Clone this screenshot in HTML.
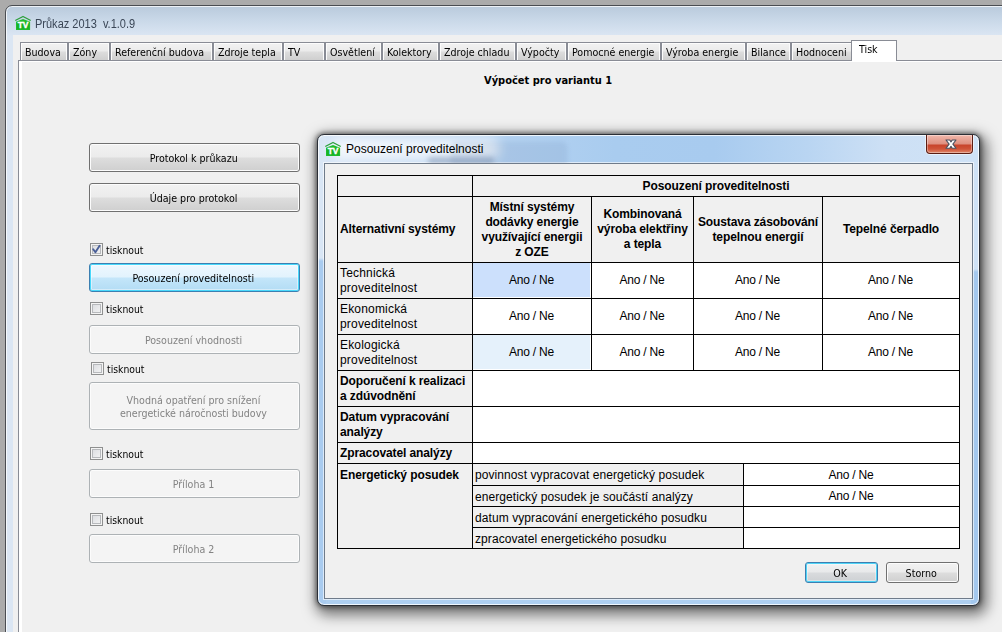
<!DOCTYPE html>
<html lang="cs"><head><meta charset="utf-8"><title>Průkaz 2013</title>
<style>
html,body{margin:0;padding:0}
body{width:1002px;height:632px;overflow:hidden;background:#ababab;position:relative;font-family:"DejaVu Sans Condensed","DejaVu Sans","Liberation Sans",sans-serif;font-size:11px;color:#000}
.abs{position:absolute}
#win{position:absolute;left:5px;top:5px;width:1100px;height:800px;border:1px solid #4a4d52;border-radius:7px;box-sizing:border-box;background:linear-gradient(#b9cadc 0,#c9d8e8 14px,#dbe6f3 30px,#dbe6f3 100%);box-shadow:inset 0 0 0 1px rgba(255,255,255,.75)}
#client{position:absolute;left:13px;top:35px;width:1000px;height:700px;background:#f0f0f0}
.ttl{position:absolute;font-family:"Liberation Sans",sans-serif;font-size:12px;white-space:nowrap}
.tab{position:absolute;top:42px;height:18px;box-sizing:border-box;border:1px solid #898c95;border-bottom:none;background:linear-gradient(#f2f2f2 0,#ebebeb 8px,#dddddd 9px,#cfcfcf 100%);box-shadow:inset 1px 1px 0 #fcfcfc,inset -1px 0 0 #fcfcfc;white-space:nowrap;line-height:19px;padding-left:4px}
.tab.sel{top:40px;height:21px;background:#fff;box-shadow:none;z-index:3;line-height:18px;padding-left:7px}
#page{position:absolute;left:18px;top:60px;width:1000px;height:700px;box-sizing:border-box;border:1px solid #898c95;background:#f0f0f0;box-shadow:inset 3px 1px 0 #fff}
.btn{position:absolute;box-sizing:border-box;border:1px solid #707070;border-radius:3px;background:linear-gradient(#f2f2f2 0,#ebebeb 48%,#dddddd 52%,#cfcfcf 100%);box-shadow:inset 0 0 0 1px #fcfcfc;text-align:center;white-space:nowrap}
.btn.dis{border-color:#adb2b5;background:#f4f4f4;color:#838383}
.btn.hot{border-color:#3c7fb1;background:linear-gradient(#eef7fe 0,#e2f3fd 48%,#c4e6fa 52%,#b2dcf4 100%);box-shadow:inset 0 0 0 1px #48d8fb,inset 0 0 0 2px rgba(255,255,255,.45)}
.btn.def{border-color:#3c7fb1;background:linear-gradient(#f1f2f3 0,#e8e9ea 48%,#d9dbdd 52%,#cdd0d3 100%);box-shadow:inset 0 0 0 1px #4fd4f7,inset 0 0 0 2px rgba(255,255,255,.35)}
.cb{position:absolute;width:13px;height:13px;box-sizing:border-box;border:1px solid #8e8f8f;background:#f4f4f4;box-shadow:inset 0 0 0 1px #f4f4f4,inset 0 0 0 2px #b7b9bc;background:linear-gradient(135deg,#d8dade,#f6f6f6)}
.lbl{position:absolute;white-space:nowrap;line-height:14px;margin-top:1px}
#dlg{position:absolute;left:317px;top:134px;width:663px;height:472px;box-sizing:border-box;border:1px solid #2b2f36;border-radius:7px;background:linear-gradient(#d9e6f5 0,#d9e6f5 123px,#a9cbef 126px) left top/8px 100% no-repeat,linear-gradient(#cfe2f6 0,#cfe2f6 134px,#a4c8ee 137px) right top/8px 100% no-repeat,linear-gradient(90deg,#d7e5f6 0,#cfe0f4 6%,#b4d2f1 28%,#a9ccef 45%,#a8cbef 60%,#b9d5f2 74%,#cde0f5 86%,#cfe2f6 100%) left top/100% 30px no-repeat,#aecff0;box-shadow:inset 0 0 0 1px rgba(255,255,255,.8),0 0 5px 1px rgba(0,0,0,.5),3px 5px 14px 4px rgba(0,0,0,.52)}
#dcl{position:absolute;left:6px;top:28px;width:647px;height:434px;background:#f0f0f0;border:1px solid #6f7b8a;box-shadow:0 0 0 1px rgba(255,255,255,.6)}
table{border-collapse:collapse;position:absolute;font-family:"Liberation Sans",sans-serif;font-size:12px}
.tc{position:absolute;font-family:"Liberation Sans",sans-serif;font-size:12px;white-space:nowrap}
.tc{letter-spacing:.08px}.tc.c{text-align:center}.tc.a{letter-spacing:-.2px}.tc.w{letter-spacing:.18px}.tc.b{font-weight:bold;letter-spacing:-.1px}
.s{display:inline-block;transform:scaleX(.962);transform-origin:0 50%}.s.m{transform-origin:50% 50%}
#cls{position:absolute;left:926px;top:135px;width:47px;height:19px;box-sizing:border-box;border:1px solid #5b1d13;border-top:none;clip-path:inset(0 -1px -1px -1px);border-radius:0 0 4px 4px;background:linear-gradient(#f2b9ad 0,#e9a597 4px,#de8f7f 9px,#c8432b 10px,#cf5338 14px,#e08a6d 100%);box-shadow:inset 0 0 0 1px rgba(255,255,255,.35),0 0 0 1px rgba(255,255,255,.55)}
#tb{position:absolute;left:318px;top:135px;width:661px;height:28px;overflow:hidden}
#glow{position:absolute;left:12px;top:3px;width:170px;height:22px;border-radius:11px;background:rgba(255,255,255,.72);filter:blur(6px)}
#smudge{position:absolute;left:134px;top:8px;width:114px;height:26px;border-radius:5px;background:rgba(100,125,170,.15);box-shadow:0 0 0 1.5px rgba(90,120,170,.12);filter:blur(2px)}
#smudge2{position:absolute;left:110px;top:22px;width:66px;height:7px;border-radius:3px;background:rgba(70,90,125,.3);filter:blur(2.5px)}
</style></head><body>
<div id="win"></div>
<div id="client"></div>
<svg class="abs" style="left:14px;top:15px" width="18" height="16" viewBox="0 0 18 16"><polygon points="2,6.8 9,3.9 16.1,6.8 16.1,14.9 2,14.9" fill="#1fbd2d"/><rect x="3" y="7.2" width="12" height="7" fill="#12ab20" opacity=".55"/><polyline points="1.7,5.3 9,1.4 16.3,5.3" stroke="#2a9d38" stroke-width="1.15" fill="none" stroke-linecap="round" stroke-linejoin="round"/><text x="9.1" y="13.4" font-size="9.4" font-weight="bold" text-anchor="middle" fill="#fff" stroke="#fff" stroke-width=".4" font-family="Liberation Sans, sans-serif" textLength="10.8" lengthAdjust="spacingAndGlyphs">TV</text></svg>
<div class="ttl" style="left:35px;top:17px;color:#3a4656;transform:scaleX(.917);transform-origin:0 50%">Průkaz 2013&nbsp; v.1.0.9</div>
<div id="page"></div>
<div class="tab" style="left:20px;width:48px"><span class="s">Budova</span></div>
<div class="tab" style="left:68px;width:42px"><span class="s">Zóny</span></div>
<div class="tab" style="left:110px;width:103px"><span class="s">Referenční budova</span></div>
<div class="tab" style="left:213px;width:70px"><span class="s">Zdroje tepla</span></div>
<div class="tab" style="left:283px;width:42px"><span class="s">TV</span></div>
<div class="tab" style="left:325px;width:57px"><span class="s">Osvětlení</span></div>
<div class="tab" style="left:382px;width:57px"><span class="s">Kolektory</span></div>
<div class="tab" style="left:439px;width:77px"><span class="s">Zdroje chladu</span></div>
<div class="tab" style="left:516px;width:51px"><span class="s">Výpočty</span></div>
<div class="tab" style="left:567px;width:94px"><span class="s">Pomocné energie</span></div>
<div class="tab" style="left:661px;width:85px"><span class="s">Výroba energie</span></div>
<div class="tab" style="left:746px;width:45px"><span class="s">Bilance</span></div>
<div class="tab" style="left:791px;width:62px"><span class="s">Hodnoceni</span></div>
<div class="tab sel" style="left:851px;width:46px"><span class="s">Tisk</span></div>
<div class="lbl" style="left:484px;top:73px;font-weight:bold;font-size:11px"><span class="s" style="transform:none">Výpočet pro variantu 1</span></div>

<div class="btn" style="left:89px;top:143px;width:211px;height:29px;line-height:30px;padding-right:2px"><span class="s m">Protokol k průkazu</span></div>
<div class="btn" style="left:89px;top:183px;width:211px;height:29px;line-height:30px;padding-right:2px"><span class="s m">Údaje pro protokol</span></div>
<div class="cb" style="left:90px;top:243px"><svg width="11" height="11" viewBox="0 0 11 11" style="position:absolute;left:0;top:0"><path d="M2.2 5.2 L4.4 8.2 L8.6 1.8" fill="none" stroke="#4a5f97" stroke-width="1.9" stroke-linecap="round" stroke-linejoin="round"/></svg></div><div class="lbl" style="left:106px;top:243px"><span class="s" style="transform:scaleX(.935)">tisknout</span></div>
<div class="btn hot" style="left:89px;top:263px;width:211px;height:29px;line-height:30px;padding-right:2px"><span class="s m">Posouzení proveditelnosti</span></div>
<div class="cb" style="left:90px;top:302px"></div><div class="lbl" style="left:106px;top:302px"><span class="s" style="transform:scaleX(.935)">tisknout</span></div>
<div class="btn dis" style="left:89px;top:325px;width:211px;height:29px;line-height:30px;padding-right:2px"><span class="s m">Posouzení vhodnosti</span></div>
<div class="cb" style="left:91px;top:362px"></div><div class="lbl" style="left:107px;top:362px"><span class="s" style="transform:scaleX(.935)">tisknout</span></div>
<div class="btn dis" style="left:89px;top:382px;width:211px;height:48px;line-height:13px;padding-top:11px;padding-right:2px"><span class="s m">Vhodná opatření pro snížení<br>energetické náročnosti budovy</span></div>
<div class="cb" style="left:90px;top:447px"></div><div class="lbl" style="left:106px;top:447px"><span class="s" style="transform:scaleX(.935)">tisknout</span></div>
<div class="btn dis" style="left:89px;top:469px;width:211px;height:29px;line-height:30px;padding-right:2px"><span class="s m">Příloha 1</span></div>
<div class="cb" style="left:90px;top:513px"></div><div class="lbl" style="left:106px;top:513px"><span class="s" style="transform:scaleX(.935)">tisknout</span></div>
<div class="btn dis" style="left:89px;top:534px;width:211px;height:29px;line-height:30px;padding-right:2px"><span class="s m">Příloha 2</span></div>

<div id="dlg"><div id="dcl"></div></div>
<div id="tb"><div id="glow"></div><div id="smudge"></div><div id="smudge2"></div></div>
<div id="cls"><svg width="14" height="13" viewBox="-1.6 -1.6 11.2 10.4" style="position:absolute;left:16.5px;top:2.6px"><path d="M0,0H3L4,1.5L5,0H8L5.5,3.3L8,6.6H5L4,5.1L3,6.6H0L2.5,3.3Z" fill="#fff" stroke="#4a5160" stroke-width=".9" stroke-linejoin="round"/></svg></div>
<svg class="abs" style="left:324px;top:141px" width="18" height="16" viewBox="0 0 18 16"><polygon points="2,6.8 9,3.9 16.1,6.8 16.1,14.9 2,14.9" fill="#1fbd2d"/><rect x="3" y="7.2" width="12" height="7" fill="#12ab20" opacity=".55"/><polyline points="1.7,5.3 9,1.4 16.3,5.3" stroke="#2a9d38" stroke-width="1.15" fill="none" stroke-linecap="round" stroke-linejoin="round"/><text x="9.1" y="13.4" font-size="9.4" font-weight="bold" text-anchor="middle" fill="#fff" stroke="#fff" stroke-width=".4" font-family="Liberation Sans, sans-serif" textLength="10.8" lengthAdjust="spacingAndGlyphs">TV</text></svg>
<div class="ttl" style="left:346px;top:142px;color:#000">Posouzení proveditelnosti</div>
<div class="abs" style="left:473px;top:263px;width:486px;height:200px;background:#fff"></div>
<div class="abs" style="left:744px;top:464px;width:215px;height:84px;background:#fff"></div>
<div class="abs" style="left:473px;top:263px;width:117px;height:34px;background:#cce0fc"></div>
<div class="abs" style="left:473px;top:335px;width:117px;height:34px;background:#e5f1fb"></div>
<div class="abs" style="left:337px;top:175px;width:623px;height:1px;background:#000"></div>
<div class="abs" style="left:337px;top:196px;width:623px;height:1px;background:#000"></div>
<div class="abs" style="left:337px;top:262px;width:623px;height:1px;background:#000"></div>
<div class="abs" style="left:337px;top:298px;width:623px;height:1px;background:#000"></div>
<div class="abs" style="left:337px;top:334px;width:623px;height:1px;background:#000"></div>
<div class="abs" style="left:337px;top:370px;width:623px;height:1px;background:#000"></div>
<div class="abs" style="left:337px;top:406px;width:623px;height:1px;background:#000"></div>
<div class="abs" style="left:337px;top:442px;width:623px;height:1px;background:#000"></div>
<div class="abs" style="left:337px;top:463px;width:623px;height:1px;background:#000"></div>
<div class="abs" style="left:472px;top:485px;width:488px;height:1px;background:#000"></div>
<div class="abs" style="left:472px;top:506px;width:488px;height:1px;background:#000"></div>
<div class="abs" style="left:472px;top:527px;width:488px;height:1px;background:#000"></div>
<div class="abs" style="left:337px;top:548px;width:623px;height:1px;background:#000"></div>
<div class="abs" style="left:337px;top:175px;width:1px;height:374px;background:#000"></div>
<div class="abs" style="left:959px;top:175px;width:1px;height:374px;background:#000"></div>
<div class="abs" style="left:472px;top:175px;width:1px;height:374px;background:#000"></div>
<div class="abs" style="left:591px;top:196px;width:1px;height:175px;background:#000"></div>
<div class="abs" style="left:693px;top:196px;width:1px;height:175px;background:#000"></div>
<div class="abs" style="left:822px;top:196px;width:1px;height:175px;background:#000"></div>
<div class="abs" style="left:743px;top:463px;width:1px;height:86px;background:#000"></div>
<div class="tc c b" style="left:473px;top:179px;width:486px;line-height:15px">Posouzení proveditelnosti</div>
<div class="tc b" style="left:340px;top:222px;width:130px;line-height:15px">Alternativní systémy</div>
<div class="tc c b" style="left:473px;top:200px;width:118px;line-height:15px">Místní systémy<br>dodávky energie<br>využívající energii<br>z OZE</div>
<div class="tc c b" style="left:592px;top:207px;width:101px;line-height:15px">Kombinovaná<br>výroba elektřiny<br>a tepla</div>
<div class="tc c b" style="left:694px;top:215px;width:128px;line-height:15px">Soustava zásobování<br>tepelnou energií</div>
<div class="tc c b" style="left:823px;top:222px;width:136px;line-height:15px">Tepelné čerpadlo</div>
<div class="tc w" style="left:340px;top:266px;width:130px;line-height:15px">Technická<br>proveditelnost</div>
<div class="tc c a" style="left:473px;top:273px;width:117px;line-height:15px">Ano / Ne</div>
<div class="tc c a" style="left:592px;top:273px;width:100px;line-height:15px">Ano / Ne</div>
<div class="tc c a" style="left:694px;top:273px;width:127px;line-height:15px">Ano / Ne</div>
<div class="tc c a" style="left:823px;top:273px;width:135px;line-height:15px">Ano / Ne</div>
<div class="tc w" style="left:340px;top:302px;width:130px;line-height:15px">Ekonomická<br>proveditelnost</div>
<div class="tc c a" style="left:473px;top:309px;width:117px;line-height:15px">Ano / Ne</div>
<div class="tc c a" style="left:592px;top:309px;width:100px;line-height:15px">Ano / Ne</div>
<div class="tc c a" style="left:694px;top:309px;width:127px;line-height:15px">Ano / Ne</div>
<div class="tc c a" style="left:823px;top:309px;width:135px;line-height:15px">Ano / Ne</div>
<div class="tc w" style="left:340px;top:338px;width:130px;line-height:15px">Ekologická<br>proveditelnost</div>
<div class="tc c a" style="left:473px;top:345px;width:117px;line-height:15px">Ano / Ne</div>
<div class="tc c a" style="left:592px;top:345px;width:100px;line-height:15px">Ano / Ne</div>
<div class="tc c a" style="left:694px;top:345px;width:127px;line-height:15px">Ano / Ne</div>
<div class="tc c a" style="left:823px;top:345px;width:135px;line-height:15px">Ano / Ne</div>
<div class="tc b" style="left:340px;top:374px;width:130px;line-height:15px">Doporučení k realizaci<br>a zdúvodnění</div>
<div class="tc b" style="left:340px;top:410px;width:130px;line-height:15px">Datum vypracování<br>analýzy</div>
<div class="tc b" style="left:340px;top:446px;width:130px;line-height:15px">Zpracovatel analýzy</div>
<div class="tc b" style="left:340px;top:468px;width:130px;line-height:15px">Energetický posudek</div>
<div class="tc " style="left:475px;top:468px;width:265px;line-height:15px">povinnost vypracovat energetický posudek</div>
<div class="tc " style="left:475px;top:490px;width:265px;line-height:15px">energetický posudek je součástí analýzy</div>
<div class="tc " style="left:475px;top:511px;width:265px;line-height:15px">datum vypracování energetického posudku</div>
<div class="tc " style="left:475px;top:532px;width:265px;line-height:15px">zpracovatel energetického posudku</div>
<div class="tc c a" style="left:744px;top:468px;width:214px;line-height:15px">Ano / Ne</div>
<div class="tc c a" style="left:744px;top:489px;width:214px;line-height:15px">Ano / Ne</div>
<div class="btn def" style="left:805px;top:562px;width:73px;height:21px;line-height:22px;padding-right:2px"><span class="s m">OK</span></div>
<div class="btn" style="left:886px;top:562px;width:73px;height:21px;line-height:22px;padding-right:2px"><span class="s m">Storno</span></div>
</body></html>
